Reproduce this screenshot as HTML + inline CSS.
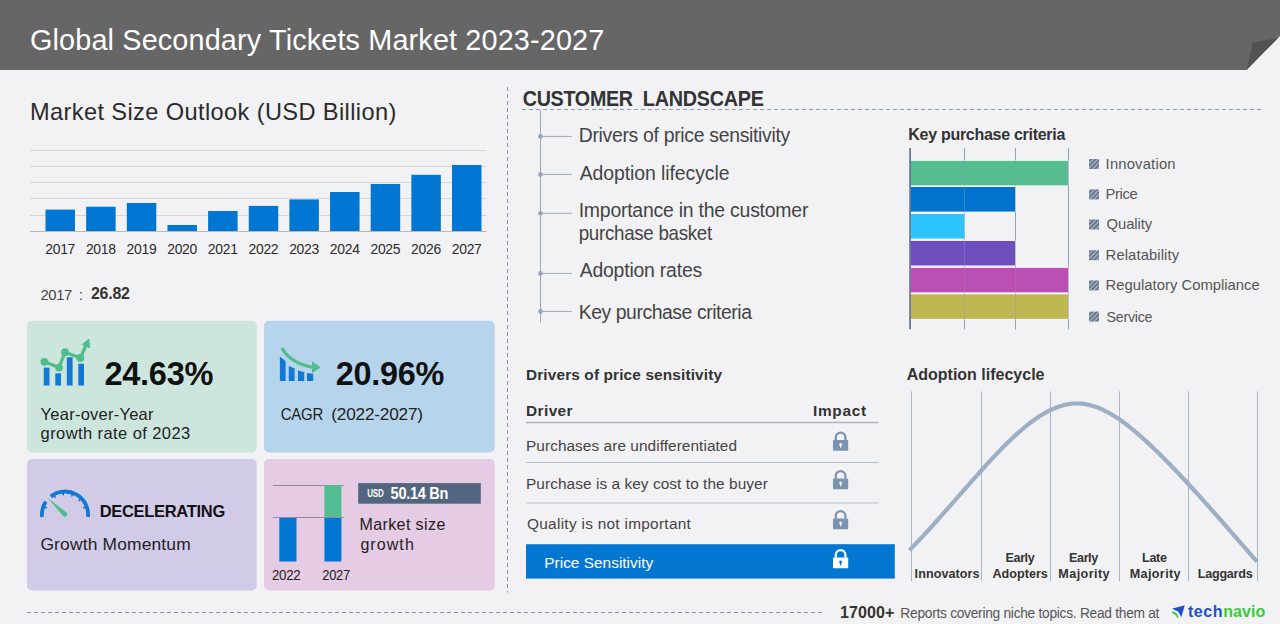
<!DOCTYPE html>
<html><head><meta charset="utf-8"><style>
html,body{margin:0;padding:0;background:#f2f2f4;width:1280px;height:624px;overflow:hidden}
svg{display:block;font-family:"Liberation Sans",sans-serif}
text{white-space:pre}
</style></head><body>
<svg width="1280" height="624" viewBox="0 0 1280 624">
<rect width="1280" height="624" fill="#f2f2f4"/>
<polygon points="0,0 1280,0 1280,36 1246.5,70 0,70" fill="#666666"/>
<polygon points="1246.5,70 1252.7,42.6 1278,38" fill="#535353"/>
<line x1="30" y1="150.5" x2="486.5" y2="150.5" stroke="#d6d6d8" stroke-width="1"/>
<line x1="30" y1="166.5" x2="486.5" y2="166.5" stroke="#d6d6d8" stroke-width="1"/>
<line x1="30" y1="182.5" x2="486.5" y2="182.5" stroke="#d6d6d8" stroke-width="1"/>
<line x1="30" y1="198.5" x2="486.5" y2="198.5" stroke="#d6d6d8" stroke-width="1"/>
<line x1="30" y1="215.5" x2="486.5" y2="215.5" stroke="#d6d6d8" stroke-width="1"/>
<rect x="45.50" y="209.6" width="29.5" height="21.70" fill="#0177d3"/>
<rect x="86.15" y="206.7" width="29.5" height="24.60" fill="#0177d3"/>
<rect x="126.80" y="203" width="29.5" height="28.30" fill="#0177d3"/>
<rect x="167.45" y="225" width="29.5" height="6.30" fill="#0177d3"/>
<rect x="208.10" y="211" width="29.5" height="20.30" fill="#0177d3"/>
<rect x="248.75" y="205.9" width="29.5" height="25.40" fill="#0177d3"/>
<rect x="289.40" y="199.4" width="29.5" height="31.90" fill="#0177d3"/>
<rect x="330.05" y="192" width="29.5" height="39.30" fill="#0177d3"/>
<rect x="370.70" y="184" width="29.5" height="47.30" fill="#0177d3"/>
<rect x="411.35" y="174.8" width="29.5" height="56.50" fill="#0177d3"/>
<rect x="452.00" y="165" width="29.5" height="66.30" fill="#0177d3"/>
<line x1="30" y1="231.5" x2="486.5" y2="231.5" stroke="#b8b8ba" stroke-width="1"/>
<rect x="27" y="320.8" width="229.7" height="131.7" rx="5" fill="#cce6dd"/>
<rect x="264" y="320.8" width="230.8" height="131.7" rx="5" fill="#b6d4ec"/>
<rect x="27" y="459" width="229.7" height="131.5" rx="5" fill="#d2cbe8"/>
<rect x="264" y="459" width="230.8" height="131.5" rx="5" fill="#e6cbe4"/>
<rect x="43.7" y="367.6" width="5.799999999999997" height="17.899999999999977" fill="#1278d6"/>
<rect x="55.3" y="373.3" width="5.700000000000003" height="12.199999999999989" fill="#1278d6"/>
<rect x="66.8" y="357.3" width="5.799999999999997" height="28.19999999999999" fill="#1278d6"/>
<rect x="78.3" y="363.7" width="5.700000000000003" height="21.80000000000001" fill="#1278d6"/>
<polyline points="44.4,361.8 59,367.6 65,352.2 80.3,358 86.5,344" fill="none" stroke="#50be8b" stroke-width="3.2" stroke-linejoin="round"/>
<circle cx="44.4" cy="361.8" r="3.9" fill="#50be8b"/>
<circle cx="59" cy="367.6" r="3.9" fill="#50be8b"/>
<circle cx="65" cy="352.2" r="3.9" fill="#50be8b"/>
<circle cx="80.3" cy="358" r="3.9" fill="#50be8b"/>
<polygon points="88.8,339.5 82.5,344.5 89.5,347.5" fill="#50be8b" stroke="#50be8b" stroke-width="1.2" stroke-linejoin="round"/>
<path d="M279.9,356.7 L285.6,361 L285.6,381 L279.9,381 Z" fill="#1278d6"/>
<path d="M288.8,366 L294.6,368.5 L294.6,381 L288.8,381 Z" fill="#1278d6"/>
<path d="M298,370.5 L304.2,372 L304.2,381 L298,381 Z" fill="#1278d6"/>
<path d="M307,373 L313.2,373.7 L313.2,381 L307,381 Z" fill="#1278d6"/>
<path d="M282.5,349.2 Q292,364 313,367.3" fill="none" stroke="#50be8b" stroke-width="3.2" stroke-linecap="round"/>
<polygon points="320,367.3 312.5,362 312.5,372.5" fill="#50be8b" stroke="#50be8b" stroke-width="1" stroke-linejoin="round"/>
<path d="M87.97,517.01 A23.1,23.1 0 0 0 50.78,496.40" fill="none" stroke="#1278d6" stroke-width="3.8"/>
<path d="M45.85,501.68 A23.1,23.1 0 0 0 42.03,517.01" fill="none" stroke="#1278d6" stroke-width="3.8"/>
<line x1="85.77" y1="507.04" x2="83.14" y2="508.00" stroke="#1278d6" stroke-width="1.6"/>
<line x1="80.63" y1="498.97" x2="78.65" y2="500.95" stroke="#1278d6" stroke-width="1.6"/>
<line x1="72.56" y1="493.83" x2="71.60" y2="496.46" stroke="#1278d6" stroke-width="1.6"/>
<line x1="63.07" y1="492.58" x2="63.32" y2="495.37" stroke="#1278d6" stroke-width="1.6"/>
<line x1="53.95" y1="495.46" x2="55.35" y2="497.89" stroke="#1278d6" stroke-width="1.6"/>
<line x1="44.23" y1="507.04" x2="46.86" y2="508.00" stroke="#1278d6" stroke-width="1.6"/>
<path d="M47.2,497.5 L67.3,513.2 Q67.5,517.5 63.6,516.6 Z" fill="#50be8b"/>
<line x1="272.8" y1="485.5" x2="343.7" y2="485.5" stroke="#8e8aa8" stroke-width="1"/>
<rect x="279.3" y="517.3" width="17.2" height="44.2" fill="#0177d3"/>
<rect x="324.4" y="517.3" width="17" height="44.2" fill="#0177d3"/>
<rect x="324.4" y="485.2" width="17" height="32.1" fill="#52bd90"/>
<line x1="272.8" y1="517.5" x2="343.7" y2="517.5" stroke="#8e8aa8" stroke-width="1"/>
<rect x="358.2" y="483.1" width="122.6" height="20.6" fill="#52657e"/>
<line x1="507.5" y1="87" x2="507.5" y2="592.5" stroke="#8394ab" stroke-width="1" stroke-dasharray="4 3"/>
<line x1="522" y1="109.5" x2="1262" y2="109.5" stroke="#8a9cb4" stroke-width="1.2" stroke-dasharray="4 3"/>
<line x1="540.5" y1="110" x2="540.5" y2="322.6" stroke="#9aaabd" stroke-width="1"/>
<line x1="540.5" y1="136.4" x2="571.7" y2="136.4" stroke="#9aaabd" stroke-width="1"/>
<circle cx="540.5" cy="136.4" r="2.3" fill="#95a5b9"/>
<line x1="540.5" y1="174.4" x2="571.7" y2="174.4" stroke="#9aaabd" stroke-width="1"/>
<circle cx="540.5" cy="174.4" r="2.3" fill="#95a5b9"/>
<line x1="540.5" y1="213.3" x2="571.7" y2="213.3" stroke="#9aaabd" stroke-width="1"/>
<circle cx="540.5" cy="213.3" r="2.3" fill="#95a5b9"/>
<line x1="540.5" y1="273.4" x2="571.7" y2="273.4" stroke="#9aaabd" stroke-width="1"/>
<circle cx="540.5" cy="273.4" r="2.3" fill="#95a5b9"/>
<line x1="540.5" y1="311.4" x2="571.7" y2="311.4" stroke="#9aaabd" stroke-width="1"/>
<circle cx="540.5" cy="311.4" r="2.3" fill="#95a5b9"/>
<line x1="964.5" y1="148" x2="964.5" y2="329.3" stroke="#9aaabe" stroke-width="1"/>
<line x1="1015.5" y1="148" x2="1015.5" y2="329.3" stroke="#9aaabe" stroke-width="1"/>
<line x1="1068.5" y1="148" x2="1068.5" y2="329.3" stroke="#9aaabe" stroke-width="1"/>
<rect x="911" y="159.8" width="157.6" height="26.2" fill="#ffffff"/>
<rect x="911" y="186" width="104.6" height="26.2" fill="#ffffff"/>
<rect x="911" y="213" width="54.1" height="26.2" fill="#ffffff"/>
<rect x="911" y="239.9" width="104.6" height="26.2" fill="#ffffff"/>
<rect x="911" y="266.8" width="157.6" height="26.2" fill="#ffffff"/>
<rect x="911" y="293.3" width="157.6" height="26.2" fill="#ffffff"/>
<rect x="911" y="160.8" width="157" height="24.6" fill="#55bd8f"/>
<rect x="911" y="187" width="104" height="24.6" fill="#0173cf"/>
<rect x="911" y="214" width="53.5" height="24.6" fill="#2ec4fe"/>
<rect x="911" y="240.9" width="104" height="24.6" fill="#6f4ebd"/>
<rect x="911" y="267.8" width="157" height="24.6" fill="#bb4fb3"/>
<rect x="911" y="294.3" width="157" height="24.6" fill="#bfb852"/>
<line x1="964.5" y1="148" x2="964.5" y2="329.3" stroke="#8a9bb2" stroke-opacity="0.4" stroke-width="1"/>
<line x1="1015.5" y1="148" x2="1015.5" y2="329.3" stroke="#8a9bb2" stroke-opacity="0.4" stroke-width="1"/>
<line x1="1068.5" y1="148" x2="1068.5" y2="329.3" stroke="#8a9bb2" stroke-opacity="0.4" stroke-width="1"/>
<line x1="910.1" y1="148" x2="910.1" y2="329.3" stroke="#66799a" stroke-width="1.8"/>
<defs><pattern id="hatch" width="3.2" height="3.2" patternUnits="userSpaceOnUse" patternTransform="rotate(45)"><rect width="3.2" height="3.2" fill="#a3b1c2"/><rect width="1.8" height="3.2" fill="#64748b"/></pattern></defs>
<rect x="1089" y="159" width="10" height="10" fill="url(#hatch)"/>
<rect x="1089" y="189.4" width="10" height="10" fill="url(#hatch)"/>
<rect x="1089" y="219.5" width="10" height="10" fill="url(#hatch)"/>
<rect x="1089" y="250.2" width="10" height="10" fill="url(#hatch)"/>
<rect x="1089" y="280.4" width="10" height="10" fill="url(#hatch)"/>
<rect x="1089" y="311.6" width="10" height="10" fill="url(#hatch)"/>
<line x1="526" y1="422.5" x2="878.6" y2="422.5" stroke="#a8b6c7" stroke-width="1.3"/>
<line x1="526" y1="462.5" x2="878.6" y2="462.5" stroke="#b3c0cf" stroke-width="1.2"/>
<line x1="526" y1="503" x2="878.6" y2="503" stroke="#b3c0cf" stroke-width="1.2"/>
<rect x="526" y="544.2" width="368.8" height="34.4" fill="#0477d3"/>
<path d="M835.8,440 L835.8,437.4 A4.8,4.8 0 0 1 845.4,437.4 L845.4,440" fill="none" stroke="#7b92b0" stroke-width="2.3"/><rect x="833" y="440" width="15.2" height="10.8" rx="0.8" fill="#7b92b0"/><circle cx="840.6" cy="444.6" r="1.5" fill="#f2f2f4"/><rect x="840" y="444.6" width="1.2" height="3.2" fill="#f2f2f4"/>
<path d="M835.8,478.5 L835.8,475.9 A4.8,4.8 0 0 1 845.4,475.9 L845.4,478.5" fill="none" stroke="#7b92b0" stroke-width="2.3"/><rect x="833" y="478.5" width="15.2" height="10.8" rx="0.8" fill="#7b92b0"/><circle cx="840.6" cy="483.1" r="1.5" fill="#f2f2f4"/><rect x="840" y="483.1" width="1.2" height="3.2" fill="#f2f2f4"/>
<path d="M835.8,518.5 L835.8,515.9 A4.8,4.8 0 0 1 845.4,515.9 L845.4,518.5" fill="none" stroke="#7b92b0" stroke-width="2.3"/><rect x="833" y="518.5" width="15.2" height="10.8" rx="0.8" fill="#7b92b0"/><circle cx="840.6" cy="523.1" r="1.5" fill="#f2f2f4"/><rect x="840" y="523.1" width="1.2" height="3.2" fill="#f2f2f4"/>
<path d="M835.8,557.5 L835.8,554.9 A4.8,4.8 0 0 1 845.4,554.9 L845.4,557.5" fill="none" stroke="#ffffff" stroke-width="2.3"/><rect x="833" y="557.5" width="15.2" height="10.8" rx="0.8" fill="#ffffff"/><circle cx="840.6" cy="562.1" r="1.5" fill="#0477d3"/><rect x="840" y="562.1" width="1.2" height="3.2" fill="#0477d3"/>
<line x1="911.5" y1="391.4" x2="911.5" y2="581" stroke="#a6b5c8" stroke-width="1"/>
<line x1="981.5" y1="391.4" x2="981.5" y2="581" stroke="#a6b5c8" stroke-width="1"/>
<line x1="1050.5" y1="391.4" x2="1050.5" y2="581" stroke="#a6b5c8" stroke-width="1"/>
<line x1="1119.5" y1="391.4" x2="1119.5" y2="581" stroke="#a6b5c8" stroke-width="1"/>
<line x1="1188.5" y1="391.4" x2="1188.5" y2="581" stroke="#a6b5c8" stroke-width="1"/>
<line x1="1257.5" y1="391.4" x2="1257.5" y2="581" stroke="#a6b5c8" stroke-width="1"/>
<path d="M909.5,550.2 L912.0,547.6 L914.5,545.0 L917.0,542.4 L919.5,539.8 L922.0,537.1 L924.5,534.4 L927.0,531.7 L929.5,529.0 L932.0,526.2 L934.5,523.4 L937.0,520.7 L939.5,517.9 L942.0,515.0 L944.5,512.2 L947.0,509.4 L949.5,506.6 L952.0,503.7 L954.5,500.9 L957.0,498.0 L959.5,495.2 L962.0,492.3 L964.5,489.5 L967.0,486.6 L969.5,483.8 L972.0,480.9 L974.5,478.1 L977.0,475.3 L979.5,472.5 L982.0,469.7 L984.5,467.0 L987.0,464.2 L989.5,461.5 L992.0,458.8 L994.5,456.1 L997.0,453.5 L999.5,450.9 L1002.0,448.3 L1004.5,445.8 L1007.0,443.3 L1009.5,440.9 L1012.0,438.5 L1014.5,436.2 L1017.0,433.9 L1019.5,431.7 L1022.0,429.5 L1024.5,427.4 L1027.0,425.4 L1029.5,423.4 L1032.0,421.5 L1034.5,419.7 L1037.0,418.0 L1039.5,416.3 L1042.0,414.8 L1044.5,413.3 L1047.0,411.9 L1049.5,410.6 L1052.0,409.4 L1054.5,408.3 L1057.0,407.3 L1059.5,406.4 L1062.0,405.7 L1064.5,405.0 L1067.0,404.4 L1069.5,404.0 L1072.0,403.7 L1074.5,403.5 L1077.0,403.5 L1079.5,403.5 L1082.0,403.7 L1084.5,404.0 L1087.0,404.5 L1089.5,405.0 L1092.0,405.7 L1094.5,406.5 L1097.0,407.3 L1099.5,408.3 L1102.0,409.4 L1104.5,410.6 L1107.0,411.9 L1109.5,413.2 L1112.0,414.7 L1114.5,416.2 L1117.0,417.8 L1119.5,419.5 L1122.0,421.3 L1124.5,423.1 L1127.0,425.0 L1129.5,426.9 L1132.0,429.0 L1134.5,431.0 L1137.0,433.1 L1139.5,435.3 L1142.0,437.5 L1144.5,439.8 L1147.0,442.1 L1149.5,444.4 L1152.0,446.8 L1154.5,449.2 L1157.0,451.6 L1159.5,454.1 L1162.0,456.5 L1164.5,459.0 L1167.0,461.6 L1169.5,464.1 L1172.0,466.7 L1174.5,469.3 L1177.0,471.9 L1179.5,474.5 L1182.0,477.2 L1184.5,479.8 L1187.0,482.5 L1189.5,485.2 L1192.0,488.0 L1194.5,490.7 L1197.0,493.4 L1199.5,496.2 L1202.0,499.0 L1204.5,501.8 L1207.0,504.6 L1209.5,507.4 L1212.0,510.2 L1214.5,513.0 L1217.0,515.8 L1219.5,518.7 L1222.0,521.5 L1224.5,524.4 L1227.0,527.2 L1229.5,530.1 L1232.0,533.0 L1234.5,535.8 L1237.0,538.7 L1239.5,541.6 L1242.0,544.5 L1244.5,547.3 L1247.0,550.2 L1249.5,553.1 L1252.0,555.9 L1254.5,558.8 L1257.0,561.6" fill="none" stroke="#9cafc5" stroke-width="4.2" stroke-linejoin="round"/>
<line x1="27" y1="612.5" x2="822.5" y2="612.5" stroke="#8393a9" stroke-width="1.2" stroke-dasharray="4 3"/>
<path d="M1171.9,608.7 L1184.8,605.3 L1181.3,617.3 L1178.2,611.6 Z" fill="#1a50cf"/>
<path d="M1172.3,611.3 Q1177.5,612 1178.7,617.8 L1177.6,618 Q1175.5,614 1172,613 Z" fill="#3ccf3c"/>
<text x="30.0" y="50" font-family="Liberation Sans" font-weight="400" font-size="28.8" letter-spacing="0.151" fill="#ffffff">Global Secondary Tickets Market 2023-2027</text>
<text x="30.0" y="119.6" font-family="Liberation Sans" font-weight="400" font-size="23.6" letter-spacing="0.383" fill="#2a2a2a">Market Size Outlook (USD Billion)</text>
<text x="40.5" y="300" font-family="Liberation Sans" font-weight="400" font-size="14.8" letter-spacing="-0.396" fill="#444444">2017</text>
<text x="79.0" y="300" font-family="Liberation Sans" font-weight="400" font-size="14.8" letter-spacing="0" fill="#444444">:</text>
<text x="91.0" y="298.9" font-family="Liberation Sans" font-weight="700" font-size="15.9" letter-spacing="-0.232" fill="#333333">26.82</text>
<text transform="translate(104.53,385.3) scale(0.9707,1)" font-family="Liberation Sans" font-weight="700" font-size="33.5" letter-spacing="-0.3" fill="#111111">24.63%</text>
<text x="40.6" y="419.6" font-family="Liberation Sans" font-weight="400" font-size="16.5" letter-spacing="0.241" fill="#222222">Year-over-Year</text>
<text x="40.6" y="439.4" font-family="Liberation Sans" font-weight="400" font-size="16.5" letter-spacing="0.411" fill="#222222">growth rate of 2023</text>
<text transform="translate(335.73,385.2) scale(0.968,1)" font-family="Liberation Sans" font-weight="700" font-size="33.5" letter-spacing="-0.3" fill="#111111">20.96%</text>
<text transform="translate(280.7,419.8) scale(0.8729,1)" font-family="Liberation Sans" font-weight="400" font-size="17.2" letter-spacing="-0.3" fill="#222222">CAGR</text>
<text x="331.3" y="419.8" font-family="Liberation Sans" font-weight="400" font-size="17.2" letter-spacing="-0.192" fill="#222222">(2022-2027)</text>
<text transform="translate(99.64,516.8) scale(0.9644,1)" font-family="Liberation Sans" font-weight="700" font-size="17.1" letter-spacing="-0.3" fill="#111111">DECELERATING</text>
<text x="40.4" y="549.8" font-family="Liberation Sans" font-weight="400" font-size="17.4" letter-spacing="0.173" fill="#222222">Growth Momentum</text>
<text transform="translate(272.0,580) scale(0.9272,1)" font-family="Liberation Sans" font-weight="400" font-size="14.3" letter-spacing="-0.3" fill="#222222">2022</text>
<text transform="translate(322.3,580) scale(0.9013,1)" font-family="Liberation Sans" font-weight="400" font-size="14.3" letter-spacing="-0.3" fill="#222222">2027</text>
<text transform="translate(367.3,497) scale(0.7649,1)" font-family="Liberation Sans" font-weight="700" font-size="10.4" letter-spacing="-0.3" fill="#ffffff">USD</text>
<text transform="translate(390.6,498.5) scale(0.9331,1)" font-family="Liberation Sans" font-weight="700" font-size="15.6" letter-spacing="-0.3" fill="#ffffff">50.14 Bn</text>
<text x="359.4" y="530.2" font-family="Liberation Sans" font-weight="400" font-size="16" letter-spacing="0.41" fill="#222222">Market size</text>
<text x="360.4" y="550.4" font-family="Liberation Sans" font-weight="400" font-size="16" letter-spacing="1.075" fill="#222222">growth</text>
<text transform="translate(522.7,105.6) scale(0.9121,1)" font-family="Liberation Sans" font-weight="700" font-size="21.6" letter-spacing="-0.3" fill="#333333">CUSTOMER</text>
<text transform="translate(642.83,105.6) scale(0.9171,1)" font-family="Liberation Sans" font-weight="700" font-size="21.6" letter-spacing="-0.3" fill="#333333">LANDSCAPE</text>
<text x="578.7" y="142.3" font-family="Liberation Sans" font-weight="400" font-size="19.4" letter-spacing="-0.304" fill="#444444">Drivers of price sensitivity</text>
<text x="579.7" y="180.2" font-family="Liberation Sans" font-weight="400" font-size="19.4" letter-spacing="-0.066" fill="#444444">Adoption lifecycle</text>
<text x="578.7" y="217.3" font-family="Liberation Sans" font-weight="400" font-size="19.4" letter-spacing="-0.212" fill="#444444">Importance in the customer</text>
<text transform="translate(578.73,239.5) scale(0.9666,1)" font-family="Liberation Sans" font-weight="400" font-size="19.4" letter-spacing="-0.3" fill="#444444">purchase basket</text>
<text x="579.7" y="277.4" font-family="Liberation Sans" font-weight="400" font-size="19.4" letter-spacing="-0.196" fill="#444444">Adoption rates</text>
<text x="578.7" y="319.1" font-family="Liberation Sans" font-weight="400" font-size="19.4" letter-spacing="-0.443" fill="#444444">Key purchase criteria</text>
<text transform="translate(908.26,140.2) scale(0.9419,1)" font-family="Liberation Sans" font-weight="700" font-size="17" letter-spacing="-0.3" fill="#333333">Key purchase criteria</text>
<text x="1105.6" y="168.75" font-family="Liberation Sans" font-weight="400" font-size="14.8" letter-spacing="0.183" fill="#555555">Innovation</text>
<text x="1105.6" y="198.75" font-family="Liberation Sans" font-weight="400" font-size="14.8" letter-spacing="-0.396" fill="#555555">Price</text>
<text x="1106.6" y="229" font-family="Liberation Sans" font-weight="400" font-size="14.8" letter-spacing="-0.092" fill="#555555">Quality</text>
<text x="1105.6" y="259.8" font-family="Liberation Sans" font-weight="400" font-size="14.8" letter-spacing="0.102" fill="#555555">Relatability</text>
<text x="1105.6" y="289.5" font-family="Liberation Sans" font-weight="400" font-size="14.8" letter-spacing="0.016" fill="#555555">Regulatory Compliance</text>
<text transform="translate(1106.6,321.5) scale(0.9681,1)" font-family="Liberation Sans" font-weight="400" font-size="14.8" letter-spacing="-0.3" fill="#555555">Service</text>
<text x="526.0" y="379.9" font-family="Liberation Sans" font-weight="700" font-size="15.4" letter-spacing="0.129" fill="#333333">Drivers of price sensitivity</text>
<text x="526.0" y="415.9" font-family="Liberation Sans" font-weight="700" font-size="15.4" letter-spacing="0.42" fill="#333333">Driver</text>
<text x="813.0" y="415.8" font-family="Liberation Sans" font-weight="700" font-size="15.4" letter-spacing="0.704" fill="#333333">Impact</text>
<text x="526.0" y="450.8" font-family="Liberation Sans" font-weight="400" font-size="15.4" letter-spacing="0.059" fill="#444444">Purchases are undifferentiated</text>
<text x="526.0" y="488.8" font-family="Liberation Sans" font-weight="400" font-size="15.4" letter-spacing="0.067" fill="#444444">Purchase is a key cost to the buyer</text>
<text x="527.0" y="528.8" font-family="Liberation Sans" font-weight="400" font-size="15.4" letter-spacing="0.282" fill="#444444">Quality is not important</text>
<text x="544.3" y="568.4" font-family="Liberation Sans" font-weight="400" font-size="15.4" letter-spacing="0.017" fill="#ffffff">Price Sensitivity</text>
<text x="906.7" y="379.75" font-family="Liberation Sans" font-weight="700" font-size="16" letter-spacing="0.0" fill="#333333">Adoption lifecycle</text>
<text x="914.6" y="577.6" font-family="Liberation Sans" font-weight="700" font-size="12.6" letter-spacing="0.059" fill="#333333">Innovators</text>
<text x="1005.6" y="561.6" font-family="Liberation Sans" font-weight="700" font-size="12.6" letter-spacing="-0.426" fill="#333333">Early</text>
<text x="992.5" y="577.6" font-family="Liberation Sans" font-weight="700" font-size="12.6" letter-spacing="0.004" fill="#333333">Adopters</text>
<text x="1069.1" y="561.6" font-family="Liberation Sans" font-weight="700" font-size="12.6" letter-spacing="-0.426" fill="#333333">Early</text>
<text x="1058.3" y="577.6" font-family="Liberation Sans" font-weight="700" font-size="12.6" letter-spacing="0.431" fill="#333333">Majority</text>
<text x="1142.0" y="561.6" font-family="Liberation Sans" font-weight="700" font-size="12.6" letter-spacing="-0.297" fill="#333333">Late</text>
<text x="1129.7" y="577.6" font-family="Liberation Sans" font-weight="700" font-size="12.6" letter-spacing="0.374" fill="#333333">Majority</text>
<text x="1197.8" y="577.6" font-family="Liberation Sans" font-weight="700" font-size="12.6" letter-spacing="-0.254" fill="#333333">Laggards</text>
<text x="1188.0" y="617.3" font-family="Liberation Sans" font-weight="700" font-size="16" letter-spacing="0.525" fill="#1d50d0">tech</text>
<text x="1223.3" y="617.3" font-family="Liberation Sans" font-weight="700" font-size="16" letter-spacing="0.046" fill="#38cc3a">navio</text>
<text x="840.0" y="618.1" font-family="Liberation Sans" font-weight="700" font-size="16.0" letter-spacing="0.102" fill="#333333">17000+</text>
<text transform="translate(900.37,618.4) scale(0.931,1)" font-family="Liberation Sans" font-weight="400" font-size="14.8" letter-spacing="-0.3" fill="#555555">Reports covering niche topics. Read them at</text>
<text transform="translate(45.25,253.6) scale(0.9539,1)" font-family="Liberation Sans" font-weight="400" font-size="14.6" letter-spacing="-0.3" fill="#2b2b2b">2017</text>
<text transform="translate(85.9,253.6) scale(0.9539,1)" font-family="Liberation Sans" font-weight="400" font-size="14.6" letter-spacing="-0.3" fill="#2b2b2b">2018</text>
<text transform="translate(126.55,253.6) scale(0.9539,1)" font-family="Liberation Sans" font-weight="400" font-size="14.6" letter-spacing="-0.3" fill="#2b2b2b">2019</text>
<text transform="translate(167.2,253.6) scale(0.9539,1)" font-family="Liberation Sans" font-weight="400" font-size="14.6" letter-spacing="-0.3" fill="#2b2b2b">2020</text>
<text transform="translate(207.85,253.6) scale(0.9539,1)" font-family="Liberation Sans" font-weight="400" font-size="14.6" letter-spacing="-0.3" fill="#2b2b2b">2021</text>
<text transform="translate(248.5,253.6) scale(0.9539,1)" font-family="Liberation Sans" font-weight="400" font-size="14.6" letter-spacing="-0.3" fill="#2b2b2b">2022</text>
<text transform="translate(289.15,253.6) scale(0.9539,1)" font-family="Liberation Sans" font-weight="400" font-size="14.6" letter-spacing="-0.3" fill="#2b2b2b">2023</text>
<text transform="translate(329.8,253.6) scale(0.9539,1)" font-family="Liberation Sans" font-weight="400" font-size="14.6" letter-spacing="-0.3" fill="#2b2b2b">2024</text>
<text transform="translate(370.45,253.6) scale(0.9539,1)" font-family="Liberation Sans" font-weight="400" font-size="14.6" letter-spacing="-0.3" fill="#2b2b2b">2025</text>
<text transform="translate(411.1,253.6) scale(0.9539,1)" font-family="Liberation Sans" font-weight="400" font-size="14.6" letter-spacing="-0.3" fill="#2b2b2b">2026</text>
<text transform="translate(451.75,253.6) scale(0.9539,1)" font-family="Liberation Sans" font-weight="400" font-size="14.6" letter-spacing="-0.3" fill="#2b2b2b">2027</text>
</svg>
</body></html>
